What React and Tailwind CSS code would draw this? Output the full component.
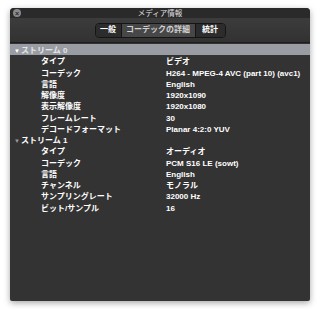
import React from "react";

const stream0 = [
  ["タイプ", "ビデオ"],
  ["コーデック", "H264 - MPEG-4 AVC (part 10) (avc1)"],
  ["言語", "English"],
  ["解像度", "1920x1090"],
  ["表示解像度", "1920x1080"],
  ["フレームレート", "30"],
  ["デコードフォーマット", "Planar 4:2:0 YUV"],
];
const stream1 = [
  ["タイプ", "オーディオ"],
  ["コーデック", "PCM S16 LE (sowt)"],
  ["言語", "English"],
  ["チャンネル", "モノラル"],
  ["サンプリングレート", "32000 Hz"],
  ["ビット/サンプル", "16"],
];

const font = { fontFamily: '"Liberation Sans", "Noto Sans CJK JP", sans-serif' };

function Row({ k, v }) {
  return (
    <div className="flex h-[11.25px] items-center pt-[3px] text-[8px] font-bold text-white leading-none">
      <div className="w-[156px] pl-[31px] shrink-0">{k}</div>
      <div className="whitespace-nowrap">{v}</div>
    </div>
  );
}

function Header({ label, selected }) {
  return (
    <div
      className={
        "flex h-[11.25px] items-center pt-[2px] text-[8px] font-bold leading-none pl-[4px] " +
        (selected ? "bg-[#999ca2] text-[#e4e6ea]" : "text-white")
      }
    >
      <span className={"text-[6px] mr-[1px] " + (selected ? "text-white" : "text-[#9a9a9a]")}>▼</span>
      {label}
    </div>
  );
}

export default function App() {
  return (
    <div className="w-[320px] h-[314px] bg-white pt-[8px] pl-[10px]" style={font}>
      <div className="w-[300px] h-[293px] rounded-t-[4px] rounded-b-[2px] overflow-hidden bg-[#333333] shadow-[0_2px_6px_rgba(0,0,0,0.35)] flex flex-col">
        <div className="h-[10px] bg-[#2a2a2a] flex items-center relative">
          <div className="absolute left-[3px] top-[1px] w-[8px] h-[8px] rounded-full bg-[#8a8a8a] flex items-center justify-center text-[#2a2a2a] text-[7px] font-bold leading-none">
            ×
          </div>
          <div className="flex-1 text-center text-[7.5px] text-[#e0e0e0] leading-none pt-[1px]">メディア情報</div>
        </div>
        <div className="h-[25px] bg-gradient-to-b from-[#3c3c3c] to-[#323232] flex items-center justify-center border-b border-[#1e1e1e]">
          <div className="flex h-[15px] rounded-[4px] border border-[#151515] overflow-hidden text-[8px] font-bold leading-none">
            <div className="w-[26px] flex items-center justify-center bg-[#2c2c2c] text-white border-r border-[#151515]">一般</div>
            <div className="w-[74px] flex items-center justify-center bg-[#474747] text-[#cfcfcf] border-r border-[#151515]">コーデックの詳細</div>
            <div className="w-[29px] flex items-center justify-center bg-[#2c2c2c] text-white">統計</div>
          </div>
        </div>
        <div className="pt-[1px]">
          <Header label="ストリーム 0" selected />
          {stream0.map(([k, v], i) => (
            <Row key={"a" + i} k={k} v={v} />
          ))}
          <Header label="ストリーム 1" />
          {stream1.map(([k, v], i) => (
            <Row key={"b" + i} k={k} v={v} />
          ))}
        </div>
      </div>
    </div>
  );
}
